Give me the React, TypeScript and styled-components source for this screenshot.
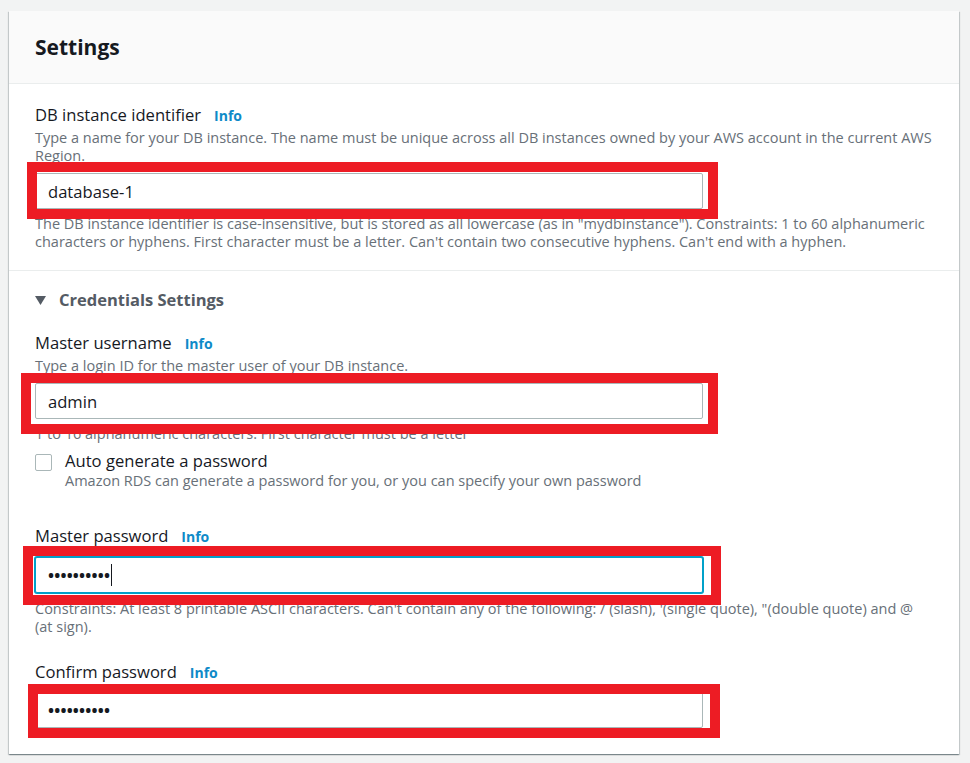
import React from "react";
import styled, { createGlobalStyle } from "styled-components";

const GlobalStyle = createGlobalStyle`
  html, body { margin: 0; padding: 0; background: #f2f3f3; }
  body { font-family: "Open Sans", "Noto Sans", Arial, sans-serif; color: #16191f; }
  * { box-sizing: border-box; }
`;

const Page = styled.div`
  width: 970px;
  min-height: 763px;
  padding: 11px 11px 10px 9px;
  background: #f2f3f3;
`;

const Card = styled.section`
  background: #ffffff;
  box-shadow: 0 1px 1px 0 rgba(0, 28, 36, 0.3), 1px 1px 1px 0 rgba(0, 28, 36, 0.15),
    -1px 1px 1px 0 rgba(0, 28, 36, 0.15);
`;

const Header = styled.header`
  background: #fafafa;
  border-bottom: 1px solid #eaeded;
  padding: 23px 26px;
`;

const Title = styled.h2`
  margin: 0;
  font-size: 21px;
  line-height: 26px;
  font-weight: 700;
  color: #16191f;
`;

const Section = styled.div<{ $top: number; $bottom: number; $divider?: boolean }>`
  padding: ${(p) => p.$top}px 26px ${(p) => p.$bottom}px;
  border-bottom: ${(p) => (p.$divider ? "1px solid #eaeded" : "none")};
`;

const Field = styled.div<{ $gap: number }>`
  margin-top: ${(p) => p.$gap}px;
  display: flex;
  flex-direction: column;
`;

const LabelRow = styled.div`
  display: flex;
  align-items: baseline;
  gap: 13px;
  font-size: 16.6px;
  line-height: 22px;
  color: #16191f;
`;

const InfoLink = styled.a`
  font-size: 14px;
  font-weight: 700;
  color: #0e8ac8;
  text-decoration: none;
`;

const Desc = styled.div<{ $gap?: number }>`
  margin-top: ${(p) => p.$gap ?? 2}px;
  font-size: 14.5px;
  line-height: 18px;
  color: #687078;
`;

const InputWrap = styled.div<{ $gap?: number }>`
  position: relative;
  margin-top: ${(p) => p.$gap ?? 8}px;
  width: 668px;
`;

const InputBox = styled.div<{ $focused?: boolean }>`
  height: 36px;
  display: flex;
  align-items: center;
  padding: 0 12px;
  background: #fff;
  border: 1px solid ${(p) => (p.$focused ? "#00a1c9" : "#aab7b8")};
  box-shadow: ${(p) => (p.$focused ? "0 0 0 1px #00a1c9" : "none")};
  border-radius: 2px;
  font-size: 16.6px;
  color: #16191f;
`;

const Dots = styled.span`
  font-size: 16px;
  letter-spacing: 0.2px;
  font-weight: 700;
  color: #16191f;
`;

const Caret = styled.span`
  display: inline-block;
  width: 1px;
  height: 22px;
  background: #16191f;
  margin-left: 1px;
`;

const RedFrame = styled.div<{ $l: number; $t: number; $r: number; $b: number }>`
  position: absolute;
  left: ${(p) => -p.$l}px;
  top: ${(p) => -p.$t}px;
  right: ${(p) => -p.$r}px;
  bottom: ${(p) => -p.$b}px;
  border: 10px solid #ed1c24;
  pointer-events: none;
`;

const Expander = styled.div`
  display: flex;
  align-items: center;
  gap: 13px;
  font-size: 16.5px;
  line-height: 22px;
  font-weight: 700;
  color: #545b64;
`;

const CheckRow = styled.div`
  margin-top: 7px;
  display: flex;
  align-items: flex-start;
  gap: 13px;
`;

const CheckBox = styled.span`
  margin-top: 4px;
  width: 17px;
  height: 17px;
  flex: none;
  border: 1px solid #aab7b8;
  border-radius: 2px;
  background: #fff;
`;

const CheckText = styled.div`
  display: flex;
  flex-direction: column;
`;

const CheckLabel = styled.div`
  font-size: 16.6px;
  line-height: 22px;
  color: #16191f;
`;

type Frame = { l: number; t: number; r: number; b: number };

function Input({
  children,
  focused,
  frame,
  gap,
}: {
  children: React.ReactNode;
  focused?: boolean;
  frame: Frame;
  gap?: number;
}) {
  return (
    <InputWrap $gap={gap}>
      <InputBox $focused={focused} role="textbox">
        {children}
      </InputBox>
      <RedFrame $l={frame.l} $t={frame.t} $r={frame.r} $b={frame.b} />
    </InputWrap>
  );
}

function Label({ text }: { text: string }) {
  return (
    <LabelRow>
      <span>{text}</span>
      <InfoLink href="#">Info</InfoLink>
    </LabelRow>
  );
}

export default function App() {
  return (
    <>
      <GlobalStyle />
      <Page>
        <Card>
          <Header>
            <Title>Settings</Title>
          </Header>
          <Section $top={20} $bottom={19} $divider>
            <Field $gap={0}>
              <Label text="DB instance identifier" />
              <Desc>
                Type a name for your DB instance. The name must be unique across all DB instances owned by
                your AWS account in the current AWS Region.
              </Desc>
              <Input frame={{ l: 8, t: 11, r: 15, b: 10 }}>database-1</Input>
              <Desc $gap={6}>
                The DB instance identifier is case-insensitive, but is stored as all lowercase (as in
                "mydbinstance"). Constraints: 1 to 60 alphanumeric characters or hyphens. First character
                must be a letter. Can't contain two consecutive hyphens. Can't end with a hyphen.
              </Desc>
            </Field>
          </Section>
          <Section $top={18} $bottom={26}>
            <Expander>
              <svg width="11" height="9" viewBox="0 0 11 9" aria-hidden="true">
                <path d="M0 0 H11 L5.5 9 Z" fill="#545b64" />
              </svg>
              <span>Credentials Settings</span>
            </Expander>
            <Field $gap={21}>
              <Label text="Master username" />
              <Desc>Type a login ID for the master user of your DB instance.</Desc>
              <Input frame={{ l: 14, t: 10, r: 15, b: 15 }}>admin</Input>
              <Desc $gap={6}>1 to 16 alphanumeric characters. First character must be a letter</Desc>
              <CheckRow>
                <CheckBox role="checkbox" aria-checked="false" />
                <CheckText>
                  <CheckLabel>Auto generate a password</CheckLabel>
                  <Desc $gap={0}>
                    Amazon RDS can generate a password for you, or you can specify your own password
                  </Desc>
                </CheckText>
              </CheckRow>
            </Field>
            <Field $gap={35}>
              <Label text="Master password" />
              <Input focused gap={9} frame={{ l: 12, t: 11, r: 18, b: 12 }}>
                <Dots>••••••••••</Dots>
                <Caret />
              </Input>
              <Desc $gap={7}>
                Constraints: At least 8 printable ASCII characters. Can't contain any of the following: /
                (slash), '(single quote), "(double quote) and @ (at sign).
              </Desc>
            </Field>
            <Field $gap={25}>
              <Label text="Confirm password" />
              <Input frame={{ l: 7, t: 8, r: 17, b: 10 }}>
                <Dots>••••••••••</Dots>
              </Input>
            </Field>
          </Section>
        </Card>
      </Page>
    </>
  );
}
